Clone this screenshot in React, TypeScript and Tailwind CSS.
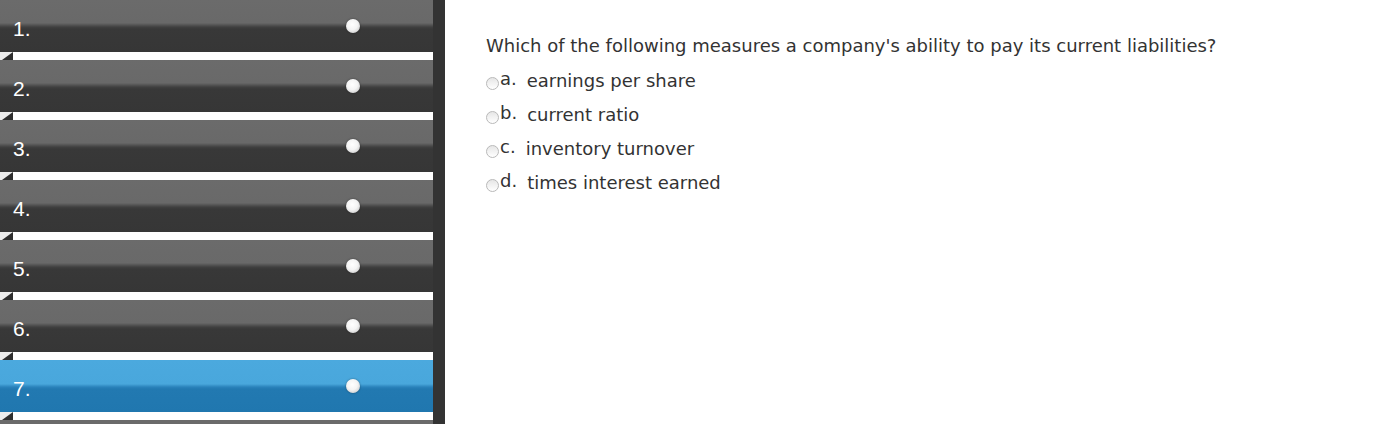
import React from "react";

const rows = [1, 2, 3, 4, 5, 6, 7];
const active = 7;

const options = [
  { key: "a.", text: "earnings per share" },
  { key: "b.", text: "current ratio" },
  { key: "c.", text: "inventory turnover" },
  { key: "d.", text: "times interest earned" },
];

function Fold() {
  return (
    <svg width="13" height="8" viewBox="0 0 13 8" className="block">
      <rect width="13" height="8" fill="#ececec" />
      <polygon points="2,8 13,0 13,8" fill="#2e2e2e" />
    </svg>
  );
}

function Knob() {
  return (
    <div className="mr-[73px] h-[14px] w-[14px] self-center rounded-full bg-[radial-gradient(circle_at_45%_40%,#ffffff_0%,#f4f4f4_45%,#cfcfcf_80%,#9a9a9a_100%)] shadow-[0_0_2px_rgba(0,0,0,0.45)]" />
  );
}

function NavRow({ n }: { n: number }) {
  const isActive = n === active;
  return (
    <div className="flex flex-col">
      <div
        className={
          isActive
            ? "flex h-[52px] items-start justify-between bg-[linear-gradient(to_bottom,#4ba9de_0%,#49a7dc_46%,#2a82bb_52%,#2279b1_56%,#2077af_100%)]"
            : "flex h-[52px] items-start justify-between bg-[linear-gradient(to_bottom,#6b6b6b_0%,#696969_44%,#404040_52%,#383838_56%,#363636_100%)]"
        }
      >
        <span className="pl-[13px] pt-[18px] font-['Liberation_Sans',Arial,sans-serif] text-[21px] leading-[21px] text-white">
          {n}.
        </span>
        <Knob />
      </div>
      <div className="h-[8px] bg-white">
        <Fold />
      </div>
    </div>
  );
}

function Radio() {
  return (
    <span className="mr-[1px] inline-block h-[13px] w-[13px] shrink-0 translate-y-[2px] rounded-full border border-[#b9b9b9] bg-[linear-gradient(to_bottom,#e6e6e6,#ffffff)]" />
  );
}

export default function App() {
  return (
    <div className="flex h-[424px] w-[1376px] overflow-hidden bg-white">
      <div className="flex w-[445px] shrink-0">
        <div className="flex w-[433px] flex-col">
          {rows.map((n) => (
            <NavRow key={n} n={n} />
          ))}
          {/* top edge of the next question tab */}
          <div className="h-[8px] bg-[#6b6b6b]" />
        </div>
        <div className="w-[12px] bg-[#333333]" />
      </div>
      <div className="pl-[41px] pt-[35px] font-['DejaVu_Sans',Verdana,sans-serif] text-[18px] text-[#333333]">
        <p className="leading-[22px]">
          Which of the following measures a company's ability to pay its current liabilities?
        </p>
        <div className="mt-[13px] flex flex-col gap-[12px]">
          {options.map((o) => (
            <label key={o.key} className="flex items-center leading-[22px]">
              <Radio />
              <span className="relative -top-[2px] mr-[10px]">{o.key}</span>
              <span>{o.text}</span>
            </label>
          ))}
        </div>
      </div>
    </div>
  );
}
